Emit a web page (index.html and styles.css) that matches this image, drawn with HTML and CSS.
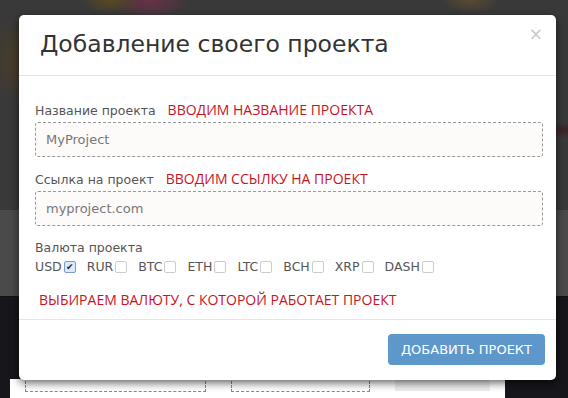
FILE: index.html
```html
<!doctype html>
<html>
    <head>
        <title>Добавление своего проекта</title>
        <link rel="stylesheet" href="styles.css">
    </head>
    <body>
        <div class="page">
            <div class="banner"></div>
            <div class="strip"></div>
            <div class="dark">
                <div class="behind">
                    <div class="ghost-input wide"></div>
                    <div class="ghost-input"></div>
                    <div class="ghost-btn"></div>
                </div>
            </div>
        </div>

        <div class="modal">
            <div class="modal-header">
                <h2>Добавление своего проекта</h2>
                <span class="close">&times;</span>
            </div>
            <div class="modal-body">
                <div class="field">
                    <p class="label">Название проекта <span class="hint">ВВОДИМ НАЗВАНИЕ ПРОЕКТА</span></p>
                    <input type="text" placeholder="MyProject">
                </div>
                <div class="field">
                    <p class="label">Ссылка на проект <span class="hint">ВВОДИМ ССЫЛКУ НА ПРОЕКТ</span></p>
                    <input type="text" placeholder="myproject.com">
                </div>
                <p class="label">Валюта проекта</p>
                <div class="currencies">
                    <label>USD<span class="box checked">&#10004;</span></label>
                    <label>RUR<span class="box"></span></label>
                    <label>BTC<span class="box"></span></label>
                    <label>ETH<span class="box"></span></label>
                    <label>LTC<span class="box"></span></label>
                    <label>BCH<span class="box"></span></label>
                    <label>XRP<span class="box"></span></label>
                    <label>DASH<span class="box"></span></label>
                </div>
                <p class="hint note">ВЫБИРАЕМ ВАЛЮТУ, С КОТОРОЙ РАБОТАЕТ ПРОЕКТ</p>
            </div>
            <div class="modal-footer">
                <button>ДОБАВИТЬ ПРОЕКТ</button>
            </div>
        </div>
    </body>
</html>
```

FILE: styles.css
```css
body {
    margin: 0;
    width: 568px;
    height: 398px;
    overflow: hidden;
    background: #16161b;
    font-family: 'DejaVu Sans', sans-serif;
}
.page {
    display: flex;
    flex-direction: column;
    height: 398px;
}
.banner {
    height: 210px;
    background:
        radial-gradient(circle at 25px 60px, #4a3e28 0, transparent 45px),
        radial-gradient(ellipse at 110px 0, #5a4a20 0, transparent 30px),
        radial-gradient(ellipse at 150px 0, #6a3048 0, transparent 40px),
        radial-gradient(ellipse at 470px 0, #5b4a30 0, transparent 30px),
        radial-gradient(ellipse at 565px 130px, #3e2226 0, transparent 35px),
        #393939;
}
.strip {
    height: 86px;
    background: #4a4a4a;
}
.dark {
    flex: 1;
    position: relative;
    background: #16161b;
    border-top: 1px solid #111;
}
.behind {
    position: absolute;
    left: 10px;
    width: 495px;
    top: 82px;
    height: 30px;
    background: #fff;
    display: flex;
    gap: 25px;
    padding: 0 15px;
    box-sizing: border-box;
}
.ghost-input {
    width: 138px;
    height: 14px;
    border: 1px dashed #888;
    border-top: none;
    margin-top: -2px;
}
.ghost-input.wide {
    width: 180px;
}
.ghost-btn {
    width: 95px;
    height: 14px;
    background: #eee;
    margin-top: -2px;
}
.modal {
    position: absolute;
    left: 19px;
    top: 15px;
    width: 537px;
    background: #fff;
    border-radius: 5px;
    box-shadow: 0 3px 9px rgba(0, 0, 0, 0.6);
}
.modal-header {
    position: relative;
    height: 60px;
    border-bottom: 1px solid #e5e5e5;
}
.modal-header h2 {
    margin: 0;
    padding: 15px 0 0 21px;
    font-size: 23.5px;
    font-weight: normal;
    color: #333;
}
.close {
    position: absolute;
    right: 13px;
    top: 9px;
    font-size: 17px;
    color: #c8c8c8;
}
.modal-body {
    padding: 25px 13px 0 16px;
    height: 244px;
    border-bottom: 1px solid #e5e5e5;
    box-sizing: border-box;
}
.field {
    margin-bottom: 13px;
}
.label {
    margin: 0 0 3px;
    font-size: 12.5px;
    color: #555;
    line-height: 17px;
}
.hint {
    font-family: 'Open Sans', sans-serif;
    font-size: 14px;
    color: #c8141e;
    margin-left: 8px;
}
input {
    display: block;
    width: 100%;
    height: 35px;
    box-sizing: border-box;
    border: 1px dashed #999;
    border-radius: 3px;
    background: #fcfbfa;
    padding: 0 10px;
    font-family: 'DejaVu Sans', sans-serif;
    font-size: 13px;
}
input::placeholder {
    color: #777;
}
.currencies {
    display: flex;
    gap: 11px;
    font-size: 12.5px;
    color: #555;
    margin-top: 2px;
}
.currencies label {
    display: flex;
    align-items: center;
}
.box {
    width: 10px;
    height: 10px;
    border: 1px solid #ccc;
    border-radius: 2px;
    margin-left: 2px;
    font-size: 9px;
    line-height: 10px;
    text-align: center;
    color: #222;
}
.box.checked {
    border-color: #7a9ccc;
    background: #dfe8f5;
}
.note {
    margin: 16px 0 0 4px;
}
.modal-footer {
    display: flex;
    justify-content: flex-end;
    padding: 14px 11px 15px;
}
button {
    width: 157px;
    height: 31px;
    border: none;
    border-radius: 4px;
    background: #5e97c9;
    color: #fff;
    font-family: 'DejaVu Sans', sans-serif;
    font-size: 13px;
}
```
